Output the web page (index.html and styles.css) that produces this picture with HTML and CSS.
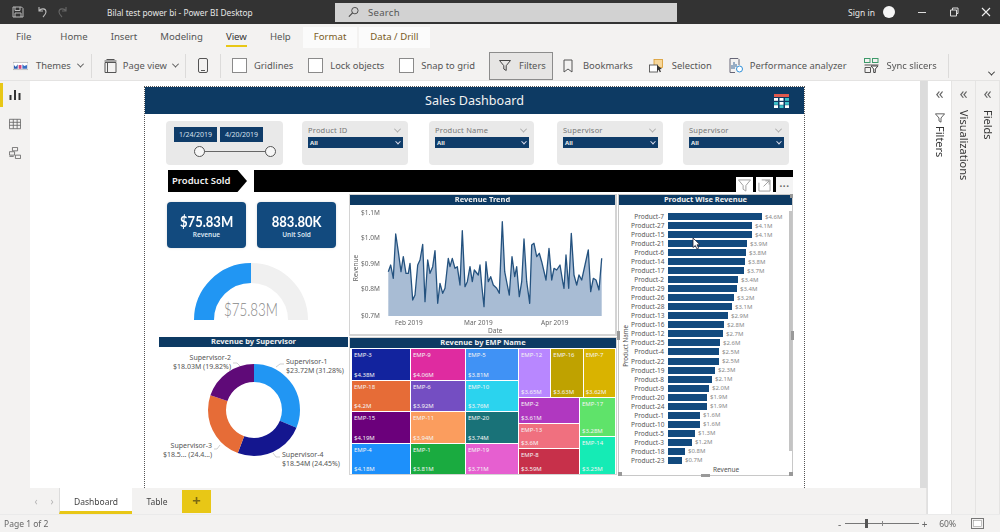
FILE: index.html
```html
<!DOCTYPE html>
<html lang="en">
<head>
  <meta charset="UTF-8">
  <title>Bilal test power bi - Power BI Desktop</title>
  <link rel="stylesheet" href="styles.css">
</head>
<body>
<div class="app">

  <!-- Title bar -->
  <div class="titlebar">
    <svg class="tb-icon save" viewBox="0 0 12 12"><path d="M1 1h8.5L11 2.5V11H1zM3 1v3.5h5V1M3 11V7h6v4" fill="none" stroke="#bbb"/></svg>
    <svg class="tb-icon undo" viewBox="0 0 12 12"><path d="M3 1v4h4M3 5c2-3 7-3 7 1 0 2-1 3-3 5" fill="none" stroke="#bbb" stroke-width="1.1"/></svg>
    <svg class="tb-icon redo" viewBox="0 0 12 12"><path d="M9 1v4H5M9 5C7 2 2 2 2 6c0 2 1 3 3 5" fill="none" stroke="#666" stroke-width="1.1"/></svg>
    <span class="doc-title">Bilal test power bi - Power BI Desktop</span>
    <div class="searchbox">
      <svg viewBox="0 0 12 12"><circle cx="7.5" cy="4.5" r="3.5" fill="none" stroke="#444"/><path d="M5 7L1 11" stroke="#444" stroke-width="1.2"/></svg>
      <span>Search</span>
    </div>
    <span class="signin">Sign in</span>
    <span class="avatar"></span>
    <div class="win-btns">
      <svg viewBox="0 0 10 10"><path d="M1 5.5h8" stroke="#ddd"/></svg>
      <svg viewBox="0 0 10 10"><path d="M1.5 3h6v6h-6zM3.5 3V1h5.5v5.5H7.5" fill="none" stroke="#ddd"/></svg>
      <svg viewBox="0 0 10 10"><path d="M1 1l8 8M9 1l-8 8" stroke="#eee" stroke-width="1.1"/></svg>
    </div>
  </div>

  <!-- Ribbon tabs -->
  <div class="ribbon-tabs">
    <span class="rtab file">File</span>
    <span class="rtab home">Home</span>
    <span class="rtab insert">Insert</span>
    <span class="rtab modeling">Modeling</span>
    <span class="rtab view">View</span>
    <span class="rtab help">Help</span>
    <span class="rtab ctx format">Format</span>
    <span class="rtab ctx drill">Data / Drill</span>
  </div>

  <!-- Ribbon -->
  <div class="ribbon">
    <div class="ritem themes">
      <svg class="ricon" viewBox="0 0 16 12"><rect y="2" width="16" height="8" fill="#fff" stroke="#999" stroke-width=".6"/><path d="M1 9V5l2 2 2-3v5z" fill="#2b5fb3"/><path d="M6 9V5h3v4z" fill="#d0407a"/><path d="M10 9V4l2 2 3-1v4z" fill="#3a6fc4"/></svg>
      <span>Themes</span><i class="chev"></i>
    </div>
    <i class="rsep"></i>
    <div class="ritem pageview">
      <svg class="ricon" viewBox="0 0 14 14"><path d="M1 2h12M3 .5h8M1.5 3.5h11v10h-11zM4 3.5v10" fill="none" stroke="#555"/></svg>
      <span>Page view</span><i class="chev"></i>
    </div>
    <i class="rsep tight"></i>
    <div class="ritem phone">
      <svg viewBox="0 0 10 15"><rect x=".5" y=".5" width="9" height="14" rx="1.5" fill="none" stroke="#555"/><path d="M3 12.5h4" stroke="#555"/></svg>
    </div>
    <i class="rsep"></i>
    <label class="check gridlines"><i></i>Gridlines</label>
    <label class="check lock"><i></i>Lock objects</label>
    <label class="check snap"><i></i>Snap to grid</label>
    <div class="filters-btn">
      <svg viewBox="0 0 12 12"><path d="M.5 1h11L7.2 6.2V11L4.8 9.5V6.2z" fill="none" stroke="#444"/></svg>
      <span>Filters</span>
    </div>
    <div class="ritem bookmarks">
      <svg viewBox="0 0 10 13"><path d="M1 .5h8v12L5 9.5 1 12.5z" fill="none" stroke="#555"/></svg>
      <span>Bookmarks</span>
    </div>
    <div class="ritem selection">
      <svg viewBox="0 0 15 14"><rect x="5" y=".5" width="8.5" height="8" fill="#f7d79a" stroke="#d99a2b" stroke-width=".8"/><rect x=".5" y="6" width="8" height="7" fill="#fff" stroke="#555" stroke-width=".9"/><path d="M8 6l5 4-2.2.3 1.2 2.5-1.2.5-1.2-2.5L8 12z" fill="#333"/></svg>
      <span>Selection</span>
    </div>
    <div class="ritem perf">
      <svg viewBox="0 0 14 15"><path d="M1 .5h8l1 1v5.5M6 14.5H1z" fill="none" stroke="#667"/><path d="M1 .5v14" stroke="#667"/><path d="M3 11V7M5 11V4M7 9V6" stroke="#5a7ea6" stroke-width="1.2"/><circle cx="10.5" cy="11" r="3" fill="#fff" stroke="#2f8fd8"/></svg>
      <span>Performance analyzer</span>
    </div>
    <div class="ritem sync">
      <svg viewBox="0 0 15 15"><rect x=".5" y=".5" width="5.5" height="4" fill="none" stroke="#3d9a6a"/><rect x="8.5" y=".5" width="5.5" height="4" fill="none" stroke="#3d9a6a"/><path d="M.5 7h14M1 9.5h5.5v5H1z" fill="none" stroke="#555"/><path d="M7 8h7l-2.7 3v3.5H9.7V11z" fill="#fff" stroke="#444"/></svg>
      <span>Sync slicers</span>
    </div>
    <i class="rsep last"></i>
    <i class="chev collapse"></i>
  </div>

  <div class="main">
    <!-- Left rail -->
    <div class="rail">
      <span class="rail-btn active">
        <svg viewBox="0 0 12 12"><path d="M1.5 11V6M6 11V1M10.5 11V4" stroke="#333" stroke-width="2"/></svg>
      </span>
      <span class="rail-btn">
        <svg viewBox="0 0 14 12"><path d="M.5.5h13v11H.5zM.5 4h13M.5 7.5h13M5 .5v11M9.5 .5v11" fill="none" stroke="#666"/></svg>
      </span>
      <span class="rail-btn">
        <svg viewBox="0 0 14 14"><path d="M4 .5h6v4H4zM.5 5.5h6v4h-6zM7.5 9.5h6v4h-6zM.5 11h5" fill="none" stroke="#666"/></svg>
      </span>
    </div>

    <div class="center">
      <div class="canvas">
        <div class="report">
          <div class="report-header">
            <h1>Sales Dashboard</h1>
            <svg class="report-logo" viewBox="0 0 15 14">
              <rect width="15" height="3" fill="#e05a4e"/>
              <g fill="#fff"><rect y="4" width="4" height="2.8"/><rect x="5.5" y="4" width="4" height="2.8"/><rect y="8" width="4" height="2.8" fill="#3fc1c9"/><rect x="5.5" y="8" width="4" height="2.8"/><rect x="11" y="8" width="4" height="2.8" fill="#3fc1c9"/><rect x="5.5" y="11.2" width="4" height="2.8" fill="#3fc1c9"/><rect y="11.2" width="4" height="2.8"/><rect x="11" y="11.2" width="4" height="2.8"/></g>
              <rect x="11" y="4" width="4" height="2.8" fill="#3fc1c9"/>
            </svg>
          </div>

          <div class="slicers">
            <div class="slicer date-slicer">
              <div class="date-boxes"><span>1/24/2019</span><span>4/20/2019</span></div>
              <div class="range"><i></i><i></i></div>
            </div>
            <div class="slicer">
              <div class="slicer-title">Product ID<i class="chev light"></i></div>
              <div class="slicer-select">All<i class="chev white"></i></div>
            </div>
            <div class="slicer">
              <div class="slicer-title">Product Name<i class="chev light"></i></div>
              <div class="slicer-select">All<i class="chev white"></i></div>
            </div>
            <div class="slicer">
              <div class="slicer-title">Supervisor<i class="chev light"></i></div>
              <div class="slicer-select">All<i class="chev white"></i></div>
            </div>
            <div class="slicer">
              <div class="slicer-title">Supervisor<i class="chev light"></i></div>
              <div class="slicer-select">All<i class="chev white"></i></div>
            </div>
          </div>

          <div class="section-row">
            <div class="section-tag">Product Sold</div>
            <div class="section-bar"></div>
          </div>

          <div class="visuals">
            <!-- Left column -->
            <div class="col-left">
              <div class="kpis">
                <div class="kpi"><b>$75.83M</b><span>Revenue</span></div>
                <div class="kpi"><b>883.80K</b><span>Unit Sold</span></div>
              </div>
              <svg class="gauge" viewBox="159 262 189 75">
                <path d="M204 320a47 47 0 0 1 94 0" fill="none" stroke="#f0f0f0" stroke-width="20"/>
                <path d="M204 320a47 47 0 0 1 47 -47" fill="none" stroke="#2196f3" stroke-width="20"/>
                <text x="224" y="316" textLength="54" lengthAdjust="spacingAndGlyphs" class="gauge-text">$75.83M</text>
              </svg>
              <div class="vis-head">Revenue by Supervisor</div>
              <svg class="donut" viewBox="159 348 189 127">
                <g fill="none" stroke-width="18" transform="rotate(-90 254 411)">
                  <circle cx="254" cy="411" r="37" pathLength="100" stroke="#2196f3" stroke-dasharray="31.28 68.72"/>
                  <circle cx="254" cy="411" r="37" pathLength="100" stroke="#14168f" stroke-dasharray="24.45 75.55" stroke-dashoffset="-31.28"/>
                  <circle cx="254" cy="411" r="37" pathLength="100" stroke="#e66c37" stroke-dasharray="24.45 75.55" stroke-dashoffset="-55.73"/>
                  <circle cx="254" cy="411" r="37" pathLength="100" stroke="#5f0a78" stroke-dasharray="19.82 80.18" stroke-dashoffset="-80.18"/>
                </g>
                <g fill="none" stroke="#bbb" stroke-width=".7">
                  <path d="M233 364h4l3 3"/><path d="M284 365h-4l-4 3"/><path d="M214 450h3l3-4"/><path d="M280 458h-4l-3-4"/>
                </g>
                <g class="donut-label">
                  <text x="231" y="360.5" text-anchor="end">Supervisor-2</text>
                  <text x="231" y="369.5" text-anchor="end">$18.03M (19.82%)</text>
                  <text x="286" y="364.5">Supervisor-1</text>
                  <text x="286" y="373.5">$23.72M (31.28%)</text>
                  <text x="212" y="448.5" text-anchor="end">Supervisor-3</text>
                  <text x="212" y="457.5" text-anchor="end">$18.5... (24.4...)</text>
                  <text x="282" y="457.5">Supervisor-4</text>
                  <text x="282" y="466.5">$18.54M (24.45%)</text>
                </g>
              </svg>
            </div>

            <!-- Center column -->
            <div class="col-center">
              <div class="visual line-visual">
                <div class="vis-head">Revenue Trend</div>
                <svg class="line-chart" viewBox="350 205 266 130">
                  <path class="line-area" d="M388.3 316V271.7L390.7 265 393.3 278.3 395.7 234 398.3 251.7 401 271.7 403.3 256.7 406 273.3 408.3 273.3 410 263.3 412.7 300 415 295 417.7 265 420 260 422.7 244.3 425 301.7 427.7 260 430 273.3 432.7 266.7 435 250.7 437.7 303.3 440 283.3 442.7 293.3 445 288.3 448.3 258.3 450 266.7 452.3 258.3 455 268.3 457.3 266.7 460 285 462.3 230.7 465 286.7 467.3 281.7 470 266.7 472.3 281.7 474.3 270 478.3 275 480 265 481.7 285 484 306.7 486 261.7 488.3 281.7 490.7 276.7 493.3 285 496.7 288.3 499.3 293.3 502.3 221.7 504.7 271.7 507.3 285 509.3 295 512 256.7 514.7 276.7 516.7 266.7 519.3 296.7 521.7 281.7 524 239 526.7 281.7 529.7 303.3 531.7 245 534 243.3 536.7 256.7 539.3 253.3 541.7 261.7 546 280 549 248.3 551.7 280 554 268.3 556.7 270 560 265 562.7 281.7 564 288.3 566 255 568.7 288.3 571.3 233.3 574 275 576.7 285 579 275 581.7 280 585 265 588.3 250 590.7 291.7 593.3 278.3 596 280 599 290 601.7 258.3V316z"/>
                  <polyline class="line-stroke" points="388.3,271.7 390.7,265 393.3,278.3 395.7,234 398.3,251.7 401,271.7 403.3,256.7 406,273.3 408.3,273.3 410,263.3 412.7,300 415,295 417.7,265 420,260 422.7,244.3 425,301.7 427.7,260 430,273.3 432.7,266.7 435,250.7 437.7,303.3 440,283.3 442.7,293.3 445,288.3 448.3,258.3 450,266.7 452.3,258.3 455,268.3 457.3,266.7 460,285 462.3,230.7 465,286.7 467.3,281.7 470,266.7 472.3,281.7 474.3,270 478.3,275 480,265 481.7,285 484,306.7 486,261.7 488.3,281.7 490.7,276.7 493.3,285 496.7,288.3 499.3,293.3 502.3,221.7 504.7,271.7 507.3,285 509.3,295 512,256.7 514.7,276.7 516.7,266.7 519.3,296.7 521.7,281.7 524,239 526.7,281.7 529.7,303.3 531.7,245 534,243.3 536.7,256.7 539.3,253.3 541.7,261.7 546,280 549,248.3 551.7,280 554,268.3 556.7,270 560,265 562.7,281.7 564,288.3 566,255 568.7,288.3 571.3,233.3 574,275 576.7,285 579,275 581.7,280 585,265 588.3,250 590.7,291.7 593.3,278.3 596,280 599,290 601.7,258.3"/>
                  <g class="axis-text">
                    <text x="361" y="214.5">$1.1M</text>
                    <text x="361" y="239.5">$1.0M</text>
                    <text x="361" y="265.5">$0.9M</text>
                    <text x="361" y="290.5">$0.8M</text>
                    <text x="361" y="318">$0.7M</text>
                    <text x="395" y="324.5">Feb 2019</text>
                    <text x="464" y="324.5">Mar 2019</text>
                    <text x="541" y="324.5">Apr 2019</text>
                    <text x="488" y="333">Date</text>
                    <text transform="translate(358 268) rotate(-90)" text-anchor="middle">Revenue</text>
                  </g>
                </svg>
              </div>
              <div class="visual tree-visual">
                <div class="vis-head">Revenue by EMP Name</div>
                <div class="treemap">
                  <div class="tm-col c1">
                    <div class="tm-cell" style="background:#12239e"><span>EMP-3</span><span>$4.38M</span></div>
                    <div class="tm-cell" style="background:#e66c37"><span>EMP-18</span><span>$4.2M</span></div>
                    <div class="tm-cell" style="background:#6b007b"><span>EMP-15</span><span>$4.19M</span></div>
                    <div class="tm-cell" style="background:#1d90fb"><span>EMP-4</span><span>$4.18M</span></div>
                  </div>
                  <div class="tm-col c2">
                    <div class="tm-cell" style="background:#df2ba0"><span>EMP-9</span><span>$4.06M</span></div>
                    <div class="tm-cell" style="background:#744ec2"><span>EMP-6</span><span>$3.92M</span></div>
                    <div class="tm-cell" style="background:#fb9d5e"><span>EMP-11</span><span>$3.94M</span></div>
                    <div class="tm-cell" style="background:#1aab40"><span>EMP-1</span><span>$3.81M</span></div>
                  </div>
                  <div class="tm-col c3">
                    <div class="tm-cell" style="background:#4092f5"><span>EMP-5</span><span>$3.81M</span></div>
                    <div class="tm-cell" style="background:#2bd3ee"><span>EMP-10</span><span>$3.76M</span></div>
                    <div class="tm-cell" style="background:#197278"><span>EMP-20</span><span>$3.74M</span></div>
                    <div class="tm-cell" style="background:#e65fd0"><span>EMP-19</span><span>$3.71M</span></div>
                  </div>
                  <div class="tm-rest">
                    <div class="tm-top">
                      <div class="tm-cell" style="background:#b887ff"><span>EMP-12</span><span>$3.65M</span></div>
                      <div class="tm-cell" style="background:#bfa200"><span>EMP-16</span><span>$3.63M</span></div>
                      <div class="tm-cell" style="background:#d9b300"><span>EMP-7</span><span>$3.62M</span></div>
                    </div>
                    <div class="tm-bottom">
                      <div class="tm-col b1">
                        <div class="tm-cell" style="background:#b038c0"><span>EMP-2</span><span>$3.61M</span></div>
                        <div class="tm-cell" style="background:#f0707f"><span>EMP-13</span><span>$3.6M</span></div>
                        <div class="tm-cell" style="background:#c7304a"><span>EMP-8</span><span>$3.59M</span></div>
                      </div>
                      <div class="tm-col b2">
                        <div class="tm-cell" style="background:#5fe36a"><span>EMP-17</span><span>$3.28M</span></div>
                        <div class="tm-cell" style="background:#15ebb5"><span>EMP-14</span><span>$3.25M</span></div>
                      </div>
                    </div>
                  </div>
                </div>
              </div>
            </div>

            <!-- Right column -->
            <div class="visual bars-visual">
              <div class="hover-tools">
                <span><svg viewBox="0 0 14 14"><path d="M.5 1h13L8.5 7v6l-3-2V7z" fill="none" stroke="#999"/></svg></span>
                <span><svg viewBox="0 0 14 14"><path d="M1 4V13H13V1H4M6 8l6-6M8 2h4v4" fill="none" stroke="#999"/></svg></span>
                <span class="dots">&middot;&middot;&middot;</span>
              </div>
              <div class="vis-head">Product Wise Revenue</div>
              <div class="bars-body">
                <div class="bars-axis"><span>Product Name</span></div>
                <div class="bars-list">
                  <div class="bar-row"><span class="bar-name">Product-7</span><i class="bar" style="width:94px"></i><span class="bar-val">$4.6M</span></div>
                  <div class="bar-row"><span class="bar-name">Product-27</span><i class="bar" style="width:84px"></i><span class="bar-val">$4.1M</span></div>
                  <div class="bar-row"><span class="bar-name">Product-15</span><i class="bar" style="width:84px"></i><span class="bar-val">$4.1M</span></div>
                  <div class="bar-row"><span class="bar-name">Product-21</span><i class="bar" style="width:79px"></i><span class="bar-val">$3.9M</span></div>
                  <div class="bar-row"><span class="bar-name">Product-6</span><i class="bar" style="width:78px"></i><span class="bar-val">$3.8M</span></div>
                  <div class="bar-row"><span class="bar-name">Product-14</span><i class="bar" style="width:77px"></i><span class="bar-val">$3.8M</span></div>
                  <div class="bar-row"><span class="bar-name">Product-17</span><i class="bar" style="width:76px"></i><span class="bar-val">$3.7M</span></div>
                  <div class="bar-row"><span class="bar-name">Product-2</span><i class="bar" style="width:70px"></i><span class="bar-val">$3.4M</span></div>
                  <div class="bar-row"><span class="bar-name">Product-29</span><i class="bar" style="width:69px"></i><span class="bar-val">$3.4M</span></div>
                  <div class="bar-row"><span class="bar-name">Product-26</span><i class="bar" style="width:66px"></i><span class="bar-val">$3.2M</span></div>
                  <div class="bar-row"><span class="bar-name">Product-28</span><i class="bar" style="width:64px"></i><span class="bar-val">$3.1M</span></div>
                  <div class="bar-row"><span class="bar-name">Product-13</span><i class="bar" style="width:60px"></i><span class="bar-val">$2.9M</span></div>
                  <div class="bar-row"><span class="bar-name">Product-16</span><i class="bar" style="width:56px"></i><span class="bar-val">$2.8M</span></div>
                  <div class="bar-row"><span class="bar-name">Product-12</span><i class="bar" style="width:55px"></i><span class="bar-val">$2.7M</span></div>
                  <div class="bar-row"><span class="bar-name">Product-25</span><i class="bar" style="width:52px"></i><span class="bar-val">$2.6M</span></div>
                  <div class="bar-row"><span class="bar-name">Product-4</span><i class="bar" style="width:51px"></i><span class="bar-val">$2.5M</span></div>
                  <div class="bar-row"><span class="bar-name">Product-22</span><i class="bar" style="width:51px"></i><span class="bar-val">$2.5M</span></div>
                  <div class="bar-row"><span class="bar-name">Product-19</span><i class="bar" style="width:47px"></i><span class="bar-val">$2.3M</span></div>
                  <div class="bar-row"><span class="bar-name">Product-8</span><i class="bar" style="width:44px"></i><span class="bar-val">$2.1M</span></div>
                  <div class="bar-row"><span class="bar-name">Product-9</span><i class="bar" style="width:41px"></i><span class="bar-val">$2.0M</span></div>
                  <div class="bar-row"><span class="bar-name">Product-20</span><i class="bar" style="width:39px"></i><span class="bar-val">$1.9M</span></div>
                  <div class="bar-row"><span class="bar-name">Product-24</span><i class="bar" style="width:39px"></i><span class="bar-val">$1.9M</span></div>
                  <div class="bar-row"><span class="bar-name">Product-1</span><i class="bar" style="width:32px"></i><span class="bar-val">$1.6M</span></div>
                  <div class="bar-row"><span class="bar-name">Product-10</span><i class="bar" style="width:32px"></i><span class="bar-val">$1.6M</span></div>
                  <div class="bar-row"><span class="bar-name">Product-5</span><i class="bar" style="width:27px"></i><span class="bar-val">$1.3M</span></div>
                  <div class="bar-row"><span class="bar-name">Product-3</span><i class="bar" style="width:24px"></i><span class="bar-val">$1.2M</span></div>
                  <div class="bar-row"><span class="bar-name">Product-18</span><i class="bar" style="width:17px"></i><span class="bar-val">$0.8M</span></div>
                  <div class="bar-row"><span class="bar-name">Product-23</span><i class="bar" style="width:14px"></i><span class="bar-val">$0.7M</span></div>
                  <div class="bars-foot">Revenue</div>
                </div>
                <div class="bars-scroll"></div>
              </div>
              <svg class="cursor" viewBox="0 0 9 13"><path d="M1 1v9.5l2.3-2 1.7 3.5 1.7-.8-1.7-3.4H8z" fill="#fff" stroke="#223" stroke-width=".8"/></svg>
              <i class="handle h-bl"></i><i class="handle h-br"></i><i class="handle h-bm"></i><i class="handle h-ml"></i><i class="handle h-mr"></i><i class="handle h-tr"></i>
            </div>
          </div>
        </div>
      </div>

      <!-- Page tabs -->
      <div class="pagebar">
        <span class="pg-arrow">&lsaquo;</span>
        <span class="pg-arrow">&rsaquo;</span>
        <span class="pg-tab active">Dashboard</span>
        <span class="pg-tab">Table</span>
        <span class="pg-add">+</span>
      </div>
    </div>

    <!-- Right panes -->
    <div class="pane pane-filters">
      <span class="collapse-arrows">&laquo;</span>
      <svg class="pane-funnel" viewBox="0 0 12 12"><path d="M.5 1h11L7.2 6V11L4.8 9.5V6z" fill="none" stroke="#444"/></svg>
      <span class="pane-label">Filters</span>
    </div>
    <div class="pane pane-grey">
      <span class="collapse-arrows">&laquo;</span>
      <span class="pane-label">Visualizations</span>
    </div>
    <div class="pane pane-grey">
      <span class="collapse-arrows">&laquo;</span>
      <span class="pane-label">Fields</span>
    </div>
  </div>

  <!-- Status bar -->
  <div class="statusbar">
    <span class="page-count">Page 1 of 2</span>
    <div class="zoom">
      <span class="zoom-sign">-</span>
      <div class="zoom-track"><i class="zoom-thumb"></i><i class="zoom-mid"></i></div>
      <span class="zoom-sign">+</span>
      <span class="zoom-pct">60%</span>
      <svg viewBox="0 0 13 11"><rect x=".5" y=".5" width="12" height="10" fill="none" stroke="#777"/><rect x="2.5" y="2.5" width="8" height="6" fill="#fff" stroke="#999" stroke-width=".6"/></svg>
    </div>
  </div>
</div>
</body>
</html>
```

FILE: styles.css
```css
* {
  box-sizing: border-box;
}

html, body {
  margin: 0;
  padding: 0;
}

body {
  font-family: "Noto Sans", "Open Sans", sans-serif;
  background: #f3f2f1;
  color: #444;
}

.app {
  width: 1000px;
  height: 532px;
  display: flex;
  flex-direction: column;
  overflow: hidden;
  filter: blur(0.35px);
}

/* Title bar */
.titlebar {
  height: 24px;
  flex: none;
  background: #333333;
  display: flex;
  align-items: center;
  padding-left: 12px;
  color: #e6e6e6;
  font-size: 8.3px;
}

.tb-icon {
  width: 12px;
  height: 12px;
  flex: none;
}

.undo { margin-left: 12px; }
.redo { margin-left: 9px; }

.doc-title {
  margin-left: 38px;
  width: 228px;
}

.searchbox {
  width: 342px;
  height: 19px;
  background: #d2d2d2;
  display: flex;
  align-items: center;
  gap: 9px;
  padding-left: 13px;
  color: #555;
  font-size: 9.5px;
  letter-spacing: .3px;
}

.searchbox svg {
  width: 11px;
  height: 12px;
}

.signin {
  margin-left: 171px;
  font-size: 8.5px;
}

.avatar {
  width: 12px;
  height: 12px;
  border-radius: 50%;
  background: #f5f5f5;
  margin-left: 8px;
}

.win-btns {
  display: flex;
  gap: 22px;
  margin-left: 22px;
}

.win-btns svg {
  width: 10px;
  height: 10px;
}

/* Ribbon */
.ribbon-tabs {
  height: 24px;
  flex: none;
  display: flex;
  align-items: stretch;
  font-size: 9.6px;
  color: #555;
  padding-left: 16px;
  background: #f3f2f1;
}

.rtab {
  padding-top: 6px;
}

.home { margin-left: 29px; }
.insert { margin-left: 23px; }
.modeling { margin-left: 23px; }
.view {
  margin-left: 23px;
  height: 23px;
  color: #333;
  border-bottom: 2px solid #e8c716;
}
.help { margin-left: 23px; }

.ctx {
  background: #fbfbfb;
  color: #7a5b1e;
  padding: 3px 11px 0;
  margin-top: 3px;
}

.format { margin-left: 12px; }
.drill { margin-left: 2px; }

.ribbon {
  height: 33px;
  flex: none;
  display: flex;
  align-items: center;
  padding: 3px 0 0 13px;
  font-size: 9.4px;
  color: #555;
  background: #f3f2f1;
  border-bottom: 1px solid #e4e3e2;
}

.ritem {
  display: flex;
  align-items: center;
  flex: none;
}

.ritem svg {
  flex: none;
}

.ricon { width: 15px; height: 14px; }

.themes span { margin-left: 8px; }
.themes .chev { margin-left: 7px; }
.pageview span { margin-left: 5px; }
.pageview .chev { margin-left: 6px; }

.rsep {
  width: 1px;
  height: 24px;
  background: #dcdbda;
  flex: none;
  margin: 0 11px 0 8px;
}

.rsep.tight { margin-left: 7px; margin-right: 12px; }

.phone svg { width: 10px; height: 15px; }
.phone { margin-right: 4px; }

.chev {
  display: inline-block;
  width: 5px;
  height: 5px;
  border-right: 1.2px solid #555;
  border-bottom: 1.2px solid #555;
  transform: rotate(45deg) translate(-1px, -1px);
  flex: none;
}

.check {
  display: flex;
  align-items: center;
  gap: 7px;
  flex: none;
  width: fit-content;
}

.check i {
  width: 15px;
  height: 15px;
  background: #fff;
  border: 1px solid #8a8a8a;
}

.lock { margin-left: 15px; }
.snap { margin-left: 15px; }

.filters-btn {
  margin-left: 14px;
  width: 64px;
  height: 28px;
  background: #e6e5e4;
  border: 1px solid #8c8c8c;
  display: flex;
  align-items: center;
  gap: 8px;
  padding-left: 9px;
  flex: none;
}

.filters-btn svg { width: 12px; height: 13px; }

.bookmarks { margin-left: 10px; gap: 10px; }
.bookmarks svg { width: 10px; height: 14px; }
.selection { margin-left: 16px; gap: 8px; }
.selection svg { width: 15px; height: 14px; }
.perf { margin-left: 17px; gap: 7px; }
.perf svg { width: 14px; height: 15px; }
.sync { margin-left: 17px; gap: 8px; }
.sync svg { width: 15px; height: 15px; }

.rsep.last { margin: 0 0 0 11px; }

.chev.collapse {
  margin-left: 40px;
  margin-top: 16px;
  border-color: #333;
}

/* Main area */
.main {
  flex: 1;
  display: flex;
  min-height: 0;
}

.rail {
  width: 30px;
  flex: none;
  display: flex;
  flex-direction: column;
  background: #f3f2f1;
  padding-top: 2px;
}

.rail-btn {
  height: 29px;
  display: flex;
  align-items: center;
  justify-content: center;
  border-left: 3px solid transparent;
}

.rail-btn.active {
  height: 24px;
  margin-bottom: 2px;
  border-left-color: #e8c716;
}

.rail-btn svg {
  width: 12px;
  height: 12px;
  margin-left: -3px;
}

.center {
  width: 897px;
  flex: none;
  display: flex;
  flex-direction: column;
}

.canvas {
  height: 407px;
  flex: none;
  background: #fff;
  border-right: 7px solid #dcdcdc;
  padding: 5px 0 0 114px;
  overflow: hidden;
}

.report {
  width: 661px;
  height: 410px;
  border: 1px dotted #555;
  background: #fff;
  display: flex;
  flex-direction: column;
}

.report-header {
  height: 27px;
  flex: none;
  background: #0d3a63;
  color: #f2f2f2;
  position: relative;
  display: flex;
  align-items: center;
  justify-content: center;
}

.report-header h1 {
  margin: 0;
  font-size: 12.6px;
  font-weight: 400;
}

.report-logo {
  position: absolute;
  width: 15px;
  height: 14px;
  right: 15px;
  top: 7px;
}

/* Slicers */
.slicers {
  display: flex;
  margin-top: 7px;
  padding-left: 21px;
  height: 44px;
  flex: none;
}

.slicer {
  width: 106px;
  background: #e9e9e9;
  border-radius: 4px;
  padding: 3px 5px 0 6px;
}

.slicer:nth-child(2) { margin-left: 19px; }
.slicer:nth-child(3) { margin-left: 21px; width: 105px; }
.slicer:nth-child(4) { margin-left: 23px; }
.slicer:nth-child(5) { margin-left: 20px; }

.date-slicer {
  width: 117px;
  padding: 6px 0 0 8px;
}

.date-boxes {
  display: flex;
  gap: 3px;
}

.date-boxes span {
  width: 43px;
  height: 15px;
  background: #0f3c69;
  color: #d6e0ee;
  font-size: 7px;
  line-height: 15px;
  text-align: center;
}

.range {
  margin: 9px 0 0 25px;
  width: 72px;
  height: 1px;
  background: #666;
  display: flex;
  justify-content: space-between;
}

.range i {
  width: 11px;
  height: 11px;
  border-radius: 50%;
  background: #f6f6f6;
  border: 1px solid #555;
  margin: -5px -5px 0;
}

.slicer-title {
  display: flex;
  justify-content: space-between;
  align-items: center;
  height: 12px;
  font-size: 7.5px;
  color: #777;
  letter-spacing: .2px;
  padding-right: 3px;
}

.slicer-select {
  display: flex;
  justify-content: space-between;
  align-items: center;
  height: 11px;
  margin-top: 1px;
  background: #0f3c69;
  color: #eee;
  font-size: 6px;
  font-weight: 700;
  padding: 0 3px 0 2px;
}

.chev.light {
  border-color: #aaa;
  border-width: 0 1px 1px 0;
}

.chev.white {
  border-color: #dde;
  width: 4px;
  height: 4px;
}

/* Section row */
.section-row {
  display: flex;
  gap: 7px;
  margin-top: 5px;
  padding-left: 23px;
  height: 22px;
  flex: none;
}

.section-tag {
  width: 79px;
  background: #000;
  color: #f2f2f2;
  font-size: 9.5px;
  font-weight: 600;
  line-height: 22px;
  padding-left: 4px;
  clip-path: polygon(0 0, 88% 0, 100% 50%, 88% 100%, 0 100%);
}

.section-bar {
  width: 539px;
  background: #000;
}

/* Visual grid */
.visuals {
  display: grid;
  grid-template-columns: 189px 268px 175px;
  column-gap: 1px;
  margin-top: 2px;
  padding-left: 14px;
  height: 282px;
  flex: none;
}

.visual {
  background: #fff;
  border: 1px solid #d4d4d4;
  position: relative;
}

.vis-head {
  height: 10px;
  background: #0d3a63;
  color: #f0f0f0;
  font-size: 7.5px;
  font-weight: 700;
  line-height: 9px;
  text-align: center;
  flex: none;
}

.col-left {
  display: flex;
  flex-direction: column;
  padding-top: 8px;
}

.kpis {
  display: flex;
  gap: 11px;
  padding-left: 8px;
}

.kpi {
  width: 79px;
  height: 46px;
  background: #124a7e;
  border-radius: 4px;
  color: #fff;
  display: flex;
  flex-direction: column;
  align-items: center;
  padding-top: 10px;
  box-shadow: 0 0 3px #ddd;
}

.kpi b {
  font-family: "Lato", sans-serif;
  font-size: 15.5px;
  line-height: 18px;
  font-weight: 700;
  transform: scaleX(.84);
}

.kpi span {
  font-size: 6.5px;
  line-height: 9px;
  font-weight: 600;
  color: #dbe7f3;
}

.gauge {
  width: 189px;
  height: 75px;
  display: block;
  margin-top: 14px;
  flex: none;
}

.gauge-text {
  font-family: "Lato", sans-serif;
  font-weight: 300;
  font-size: 18px;
  fill: #888;
}

.donut {
  width: 189px;
  height: 127px;
  display: block;
  flex: none;
}

.donut-label {
  font-size: 7px;
  fill: #555;
}

.col-center {
  display: flex;
  flex-direction: column;
  gap: 1px;
}

.line-visual {
  height: 142px;
  flex: none;
  border-width: 1px 2px 2px 1px;
}

.line-chart {
  display: block;
  width: 266px;
  height: 130px;
}

.line-area { fill: #a8bcd4; }

.line-stroke {
  fill: none;
  stroke: #24527f;
  stroke-width: 1.3;
  stroke-linejoin: round;
}

.axis-text {
  font-size: 6.5px;
  fill: #666;
}

.tree-visual {
  height: 138px;
  flex: none;
}

.treemap {
  display: flex;
  gap: 1px;
  height: 125px;
  margin: 1px 0 0 2px;
  width: 263px;
}

.tm-col {
  display: flex;
  flex-direction: column;
  gap: 1px;
  flex: none;
}

.tm-col .tm-cell { flex: 1; }
.c1 { width: 58px; }
.c2 { width: 54px; }
.c3 { width: 52px; }

.tm-rest {
  flex: 1;
  display: flex;
  flex-direction: column;
  gap: 1px;
}

.tm-top {
  height: 48px;
  display: flex;
  gap: 1px;
  flex: none;
}

.tm-top .tm-cell { flex: 1; }

.tm-bottom {
  flex: 1;
  display: flex;
  gap: 1px;
  min-height: 0;
}

.b1 { width: 60px; }
.b2 { flex: 1; }

.tm-cell {
  display: flex;
  flex-direction: column;
  justify-content: space-between;
  padding: 2px 2px 1px;
  color: #f4f4f4;
  font-size: 6px;
  line-height: 8px;
  min-height: 0;
  overflow: hidden;
}

/* Bar chart */
.bars-visual {
  height: 282px;
  display: flex;
  flex-direction: column;
  border-color: #c8c8c8;
}

.bars-body {
  flex: 1;
  display: flex;
  min-height: 0;
  position: relative;
}

.bars-axis {
  width: 12px;
  flex: none;
  display: flex;
  align-items: center;
  justify-content: center;
  padding-top: 11px;
}

.bars-axis span {
  writing-mode: vertical-rl;
  transform: rotate(180deg);
  font-size: 6.2px;
  color: #555;
  white-space: nowrap;
}

.bars-list {
  width: 157px;
  padding-top: 7px;
  flex: none;
}

.bar-row {
  display: flex;
  align-items: center;
  height: 9.04px;
}

.bar-name {
  width: 33px;
  text-align: right;
  font-size: 6.5px;
  color: #555;
  white-space: nowrap;
  flex: none;
}

.bar {
  height: 7px;
  background: #124a7e;
  margin-left: 4px;
  flex: none;
}

.bar-val {
  margin-left: 3px;
  font-size: 6px;
  color: #888;
}

.bars-foot {
  margin-left: 82px;
  font-size: 6.5px;
  color: #555;
  line-height: 9px;
}

.bars-scroll {
  width: 3px;
  height: 240px;
  margin: 6px 0 0 1px;
  background: #c4c4c4;
  flex: none;
}

.hover-tools {
  position: absolute;
  right: -1px;
  top: -18px;
  display: flex;
  gap: 3px;
}

.hover-tools span {
  width: 17px;
  height: 17px;
  background: #fff;
  display: flex;
  align-items: center;
  justify-content: center;
}

.hover-tools svg {
  width: 13px;
  height: 13px;
}

.hover-tools .dots {
  background: #f4f4f4;
  font-size: 10px;
  font-weight: 700;
  color: #666;
  letter-spacing: .5px;
}

.cursor {
  position: absolute;
  left: 73px;
  top: 42px;
  width: 9px;
  height: 13px;
}

.handle {
  position: absolute;
  background: #999;
}

.h-bl { left: -1px; bottom: -1px; width: 4px; height: 4px; }
.h-br { right: -1px; bottom: -1px; width: 4px; height: 4px; }
.h-bm { left: 82px; bottom: -2px; width: 9px; height: 3px; }
.h-ml { left: -2px; top: 136px; width: 3px; height: 9px; }
.h-mr { right: -2px; top: 136px; width: 3px; height: 9px; }
.h-tr { right: -1px; top: -1px; width: 3px; height: 4px; }

/* Page tabs */
.pagebar {
  height: 26px;
  flex: none;
  background: #f3f2f1;
  border-right: 1px solid #e4e3e2;
  display: flex;
  align-items: flex-end;
  font-size: 8.5px;
  color: #444;
}

.pg-arrow {
  width: 12px;
  height: 24px;
  margin-right: 4px;
  line-height: 22px;
  text-align: center;
  color: #b5b5b5;
  font-size: 10px;
}

.pg-tab {
  width: 50px;
  height: 26px;
  line-height: 27px;
  text-align: center;
}

.pg-tab.active {
  width: 73px;
  margin-left: -3px;
  background: #fff;
  border-bottom: 3px solid #e8c716;
  border-left: 1px solid #dcdcdc;
}

.pg-add {
  width: 29px;
  height: 23px;
  margin-bottom: 1px;
  background: #e8c716;
  text-align: center;
  line-height: 21px;
  font-size: 15px;
  font-weight: 700;
  color: #7b6a14;
}

/* Right panes */
.pane {
  width: 24px;
  flex: none;
  display: flex;
  flex-direction: column;
  align-items: center;
  border-right: 1px solid #e5e4e3;
  color: #333;
}

.pane-filters { width: 25px; background: #fff; border-left: 1px solid #e0e0e0; }
.pane-grey { background: #f3f2f1; }

.collapse-arrows {
  font-size: 16px;
  line-height: 14px;
  height: 22px;
  margin-top: 5px;
  color: #666;
}

.pane-funnel {
  width: 10px;
  height: 10px;
  margin: 5px 0 3px;
}

.pane-label {
  writing-mode: vertical-rl;
  font-size: 11px;
  line-height: 14px;
  margin-top: 2px;
}

.pane-filters .pane-label { margin-top: 0; }

/* Status bar */
.statusbar {
  height: 18px;
  flex: none;
  display: flex;
  justify-content: space-between;
  align-items: center;
  padding: 0 16px 0 4px;
  font-size: 8.5px;
  color: #666;
  background: #f3f2f1;
  border-top: 1px solid #eaeaea;
}

.zoom {
  display: flex;
  align-items: center;
}

.zoom svg {
  width: 13px;
  height: 11px;
  margin-left: 15px;
}

.zoom-sign {
  font-size: 10px;
  width: 7px;
  text-align: center;
}

.zoom-track {
  width: 74px;
  height: 1px;
  background: #777;
  margin: 0 2px;
  position: relative;
}

.zoom-thumb {
  position: absolute;
  left: 20px;
  top: -4px;
  width: 3px;
  height: 9px;
  background: #555;
}

.zoom-mid {
  position: absolute;
  left: 37px;
  top: -2px;
  width: 1px;
  height: 5px;
  background: #888;
}

.zoom-pct {
  margin-left: 11px;
}
```
